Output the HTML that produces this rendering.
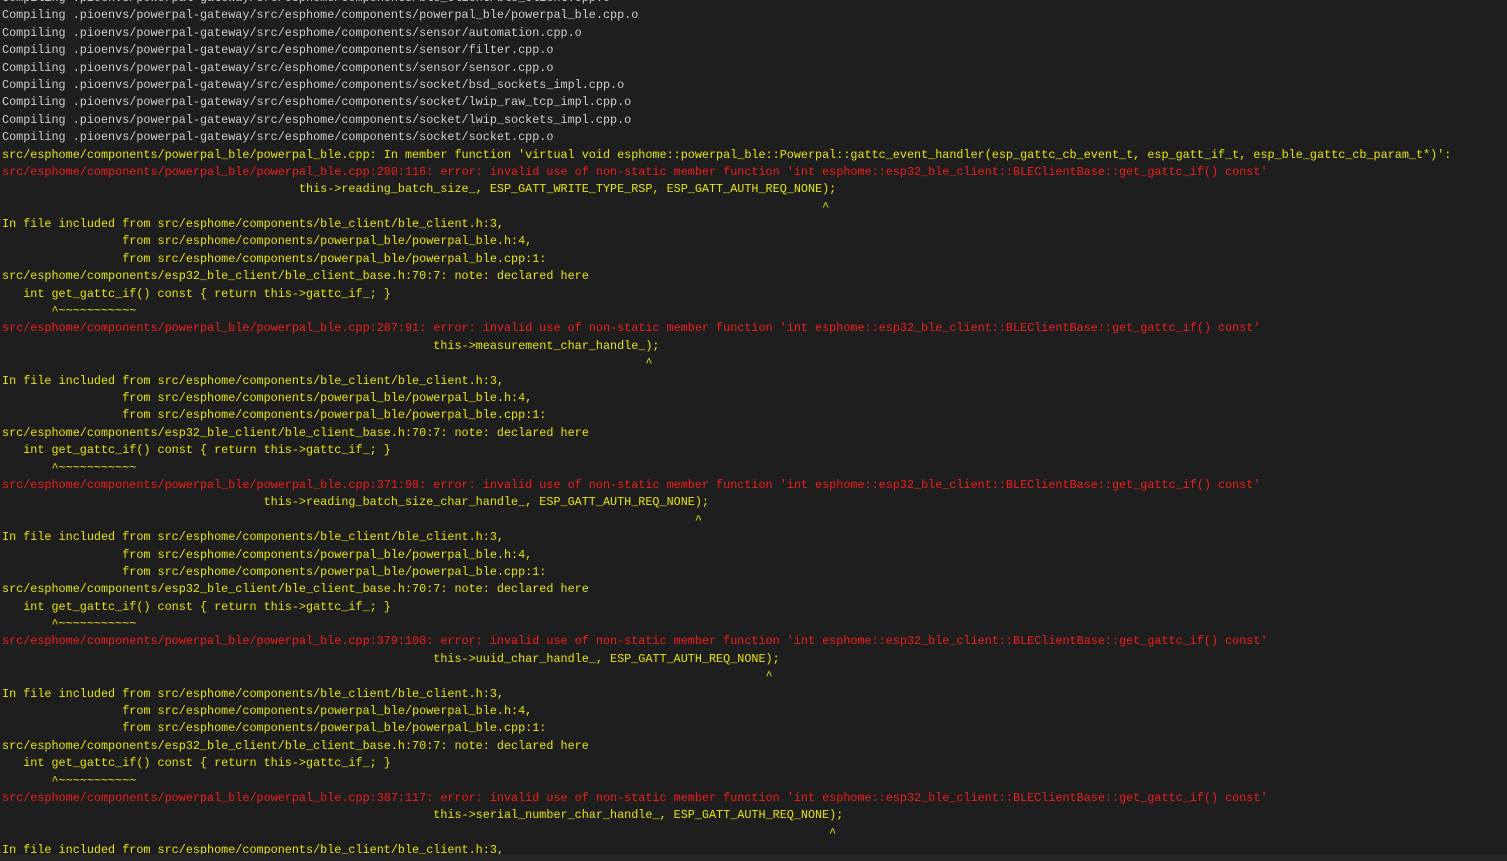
<!DOCTYPE html>
<html><head><meta charset="utf-8"><style>
html,body{margin:0;padding:0;background:#1e1e1e;width:1507px;height:861px;overflow:hidden}
pre{position:absolute;left:2px;top:-10px;margin:0;font-family:"Liberation Mono",monospace;font-size:11.79px;line-height:17.39px;color:#cccccc;white-space:pre}
.y{color:#e5e510}.r{color:#f11d1d}
.bar{position:absolute;left:0;right:0;bottom:0;height:7px;background:#252526}
</style></head><body>
<pre>Compiling .pioenvs/powerpal-gateway/src/esphome/components/ble_client/ble_client.cpp.o
Compiling .pioenvs/powerpal-gateway/src/esphome/components/powerpal_ble/powerpal_ble.cpp.o
Compiling .pioenvs/powerpal-gateway/src/esphome/components/sensor/automation.cpp.o
Compiling .pioenvs/powerpal-gateway/src/esphome/components/sensor/filter.cpp.o
Compiling .pioenvs/powerpal-gateway/src/esphome/components/sensor/sensor.cpp.o
Compiling .pioenvs/powerpal-gateway/src/esphome/components/socket/bsd_sockets_impl.cpp.o
Compiling .pioenvs/powerpal-gateway/src/esphome/components/socket/lwip_raw_tcp_impl.cpp.o
Compiling .pioenvs/powerpal-gateway/src/esphome/components/socket/lwip_sockets_impl.cpp.o
Compiling .pioenvs/powerpal-gateway/src/esphome/components/socket/socket.cpp.o
<span class="y">src/esphome/components/powerpal_ble/powerpal_ble.cpp: In member function 'virtual void esphome::powerpal_ble::Powerpal::gattc_event_handler(esp_gattc_cb_event_t, esp_gatt_if_t, esp_ble_gattc_cb_param_t*)':</span>
<span class="r">src/esphome/components/powerpal_ble/powerpal_ble.cpp:280:116: error: invalid use of non-static member function 'int esphome::esp32_ble_client::BLEClientBase::get_gattc_if() const'</span>
<span class="y">                                          this->reading_batch_size_, ESP_GATT_WRITE_TYPE_RSP, ESP_GATT_AUTH_REQ_NONE);
                                                                                                                    ^
In file included from src/esphome/components/ble_client/ble_client.h:3,
                 from src/esphome/components/powerpal_ble/powerpal_ble.h:4,
                 from src/esphome/components/powerpal_ble/powerpal_ble.cpp:1:
src/esphome/components/esp32_ble_client/ble_client_base.h:70:7: note: declared here
   int get_gattc_if() const { return this->gattc_if_; }
       ^~~~~~~~~~~~</span>
<span class="r">src/esphome/components/powerpal_ble/powerpal_ble.cpp:287:91: error: invalid use of non-static member function 'int esphome::esp32_ble_client::BLEClientBase::get_gattc_if() const'</span>
<span class="y">                                                             this->measurement_char_handle_);
                                                                                           ^
In file included from src/esphome/components/ble_client/ble_client.h:3,
                 from src/esphome/components/powerpal_ble/powerpal_ble.h:4,
                 from src/esphome/components/powerpal_ble/powerpal_ble.cpp:1:
src/esphome/components/esp32_ble_client/ble_client_base.h:70:7: note: declared here
   int get_gattc_if() const { return this->gattc_if_; }
       ^~~~~~~~~~~~</span>
<span class="r">src/esphome/components/powerpal_ble/powerpal_ble.cpp:371:98: error: invalid use of non-static member function 'int esphome::esp32_ble_client::BLEClientBase::get_gattc_if() const'</span>
<span class="y">                                     this->reading_batch_size_char_handle_, ESP_GATT_AUTH_REQ_NONE);
                                                                                                  ^
In file included from src/esphome/components/ble_client/ble_client.h:3,
                 from src/esphome/components/powerpal_ble/powerpal_ble.h:4,
                 from src/esphome/components/powerpal_ble/powerpal_ble.cpp:1:
src/esphome/components/esp32_ble_client/ble_client_base.h:70:7: note: declared here
   int get_gattc_if() const { return this->gattc_if_; }
       ^~~~~~~~~~~~</span>
<span class="r">src/esphome/components/powerpal_ble/powerpal_ble.cpp:379:108: error: invalid use of non-static member function 'int esphome::esp32_ble_client::BLEClientBase::get_gattc_if() const'</span>
<span class="y">                                                             this->uuid_char_handle_, ESP_GATT_AUTH_REQ_NONE);
                                                                                                            ^
In file included from src/esphome/components/ble_client/ble_client.h:3,
                 from src/esphome/components/powerpal_ble/powerpal_ble.h:4,
                 from src/esphome/components/powerpal_ble/powerpal_ble.cpp:1:
src/esphome/components/esp32_ble_client/ble_client_base.h:70:7: note: declared here
   int get_gattc_if() const { return this->gattc_if_; }
       ^~~~~~~~~~~~</span>
<span class="r">src/esphome/components/powerpal_ble/powerpal_ble.cpp:387:117: error: invalid use of non-static member function 'int esphome::esp32_ble_client::BLEClientBase::get_gattc_if() const'</span>
<span class="y">                                                             this->serial_number_char_handle_, ESP_GATT_AUTH_REQ_NONE);
                                                                                                                     ^
In file included from src/esphome/components/ble_client/ble_client.h:3,</span>
</pre>
<div class="bar"></div>
</body></html>
